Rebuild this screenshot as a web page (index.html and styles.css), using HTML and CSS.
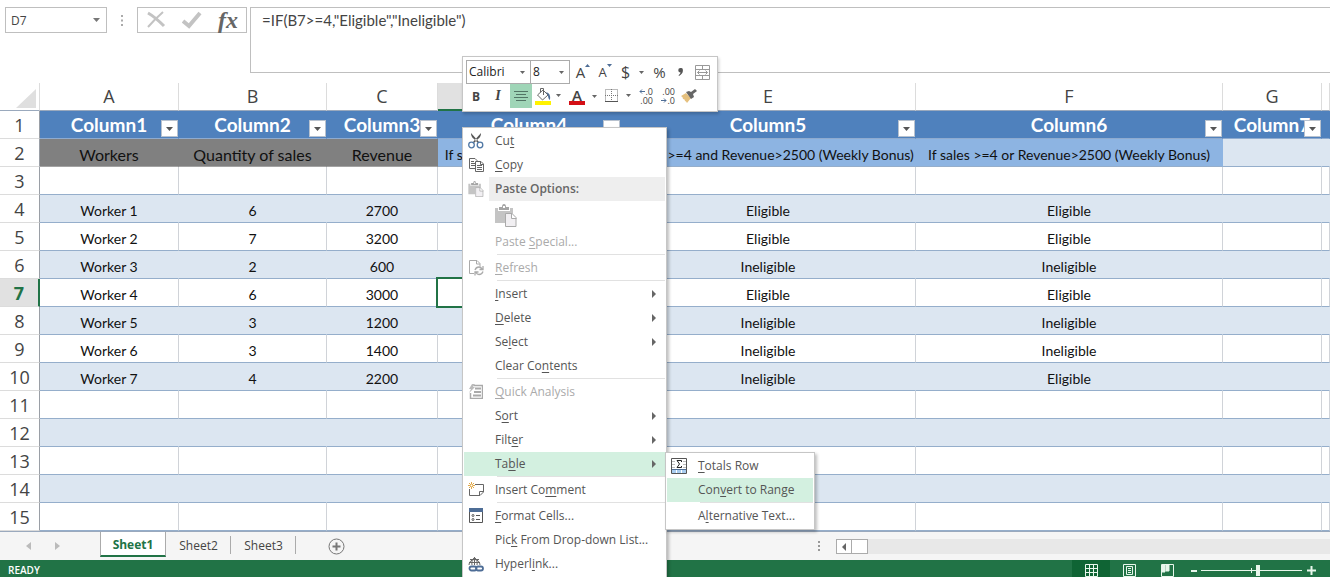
FILE: index.html
```html
<!DOCTYPE html>
<html lang="en">
<head>
<meta charset="utf-8">
<title>Worker bonuses</title>
<link rel="stylesheet" href="styles.css">
</head>
<body>
<div class="app">
  <header class="formula-bar">
    <div class="name-box">
      <input class="name-input" aria-label="Name box" value="D7">
      <button class="plain" aria-label="Cell names"><svg width="7" height="4" viewBox="0 0 7 4"><path d="M0 0h7L3.500 4z" fill="#777"/></svg></button>
    </div>
    <svg class="grip" width="2" height="11" viewBox="0 0 2 11" fill="#aaa"><path d="M0 0h2v2H0zM0 4.500h2v2H0zM0 9h2v2H0z"/></svg>
    <div class="fx-box">
      <button class="plain" aria-label="Cancel"><svg width="20" height="18" viewBox="0 0 20 18" fill="none" stroke="#c3c3c3"><path d="M2 2Q9 6 18 15" stroke-width="3"/><path d="M17 1Q9 8 2 16" stroke-width="2"/></svg></button>
      <button class="plain" aria-label="Enter"><svg width="20" height="18" viewBox="0 0 20 18" fill="none" stroke="#c3c3c3" stroke-width="4"><path d="M1 10l6 5L18 2"/></svg></button>
      <button class="plain fx" aria-label="Insert function">fx</button>
    </div>
    <textarea class="formula" aria-label="Formula">=IF(B7&gt;=4,"Eligible","Ineligible")</textarea>
  </header>

  <main class="grid">
    <table class="sheet">
      <colgroup><col class="c-num"><col class="c-a"><col class="c-b"><col class="c-c"><col class="c-d"><col class="c-e"><col class="c-f"><col class="c-g"><col></colgroup>
      <thead>
        <tr><th class="corner"><svg width="20" height="19" viewBox="0 0 20 19"><path d="M20 0v19H0z" fill="#dfdfdf"/></svg></th><th>A</th><th>B</th><th>C</th><th class="active-col"></th><th>E</th><th>F</th><th>G</th><th></th></tr>
      </thead>
      <tbody id="rows"></tbody>
    </table>
  </main>

  <nav class="tabs">
    <div class="tab-arrows">
      <button class="plain" aria-label="Previous sheet"><svg width="5" height="8" viewBox="0 0 5 8"><path d="M5 0v8L0 4z" fill="#bbb"/></svg></button>
      <button class="plain" aria-label="Next sheet"><svg width="5" height="8" viewBox="0 0 5 8"><path d="M0 0v8l5-4z" fill="#bbb"/></svg></button>
    </div>
    <button class="tab current">Sheet1</button>
    <button class="tab">Sheet2</button>
    <button class="tab">Sheet3</button>
    <button class="plain add" aria-label="New sheet"><svg width="17" height="17" viewBox="0 0 17 17" fill="none" stroke="#777"><circle cx="8.500" cy="8.500" r="7.500"/><path d="M8.500 4.500v8M4.500 8.500h8" stroke-width="2"/></svg></button>
    <svg class="tab-grip" width="2" height="10" viewBox="0 0 2 10" fill="#999"><path d="M0 0h2v2H0zM0 4h2v2H0zM0 8h2v2H0z"/></svg>
    <div class="scroll">
      <button class="plain scroll-left" aria-label="Scroll left"><svg width="4" height="8" viewBox="0 0 4 8"><path d="M4 0v8L0 4z" fill="#666"/></svg></button>
      <span class="thumb"></span>
    </div>
  </nav>

  <footer class="status">
    <span class="ready">READY</span>
    <button class="view on" aria-label="Normal"><svg width="13" height="13" viewBox="0 0 13 13" fill="none" stroke="#e8f7ec"><path d="M.5.5h12v12H.5zM4.500 0v13M8.500 0v13M0 4.500h13M0 8.500h13"/></svg></button>
    <button class="view" aria-label="Page layout"><svg width="13" height="13" viewBox="0 0 13 13" fill="none" stroke="#e8f7ec"><path d="M.5.5h12v12H.5zM3.500 2.500h6v8h-6zM5 4.500h3M5 6.500h3M5 8.500h3"/></svg></button>
    <button class="view" aria-label="Page break preview"><svg width="13" height="13" viewBox="0 0 13 13" fill="none" stroke="#e8f7ec"><path d="M.5.5h12v12H.5z"/><path d="M1 1h3v7H1zM5 1h3v6H5z" fill="#e8f7ec"/></svg></button>
    <button class="plain zoom" aria-label="Zoom out"><svg width="7" height="9" viewBox="0 0 7 9"><path d="M0 4h6v2H0z" fill="#e8f7ec"/></svg></button>
    <svg class="track" width="101" height="13" viewBox="0 0 101 13" fill="#e8f7ec"><path d="M0 6h101v1H0zM50 4h1v5h-1z"/><path d="M55 1h4v11h-4z"/></svg>
    <button class="plain zoom" aria-label="Zoom in"><svg width="9" height="9" viewBox="0 0 9 9"><path d="M3.500 0h2v3.500H9v2H5.500V9h-2V5.500H0v-2h3.500z" fill="#e8f7ec"/></svg></button>
  </footer>

  <div class="mini">
    <div class="mini-row">
      <span class="combo font"><select aria-label="Font"><option>Calibri</option></select><svg width="5" height="3" viewBox="0 0 5 3"><path d="M0 0h5L2.500 3z" fill="#666"/></svg></span>
      <span class="combo size"><select aria-label="Font size"><option>8</option></select><svg width="5" height="3" viewBox="0 0 5 3"><path d="M0 0h5L2.500 3z" fill="#666"/></svg></span>
      <button class="tool grow" aria-label="Increase font size">A<svg width="5" height="3" viewBox="0 0 5 3"><path d="M0 3h5L2.500 0z" fill="#4e6d96"/></svg></button>
      <button class="tool grow small" aria-label="Decrease font size">A<svg width="5" height="3" viewBox="0 0 5 3"><path d="M0 0h5L2.500 3z" fill="#4e6d96"/></svg></button>
      <button class="tool money" aria-label="Accounting format">$<svg width="5" height="3" viewBox="0 0 5 3"><path d="M0 0h5L2.500 3z" fill="#666"/></svg></button>
      <button class="tool pct" aria-label="Percent">%</button>
      <button class="tool comma" aria-label="Comma style"><svg width="5" height="8" viewBox="0 0 5 8"><path d="M2.500 0a2.200 2.200 0 0 1 2.400 2.400Q5 6 1 8L.6 7.200Q2.500 6 2.600 4.600A2.300 2.300 0 0 1 2.500 0z" fill="#555"/></svg></button>
      <button class="tool" aria-label="Merge and center"><svg width="15" height="15" viewBox="0 0 15 15" fill="none" stroke="#999"><path d="M.5.5h14v14H.5zM0 4.500h15M0 10.500h15M7.500 0v4M7.500 11v4M2.500 7.500h10M4.500 5.500l-2 2 2 2M10.500 5.500l2 2-2 2"/></svg></button>
    </div>
    <div class="mini-row second">
      <button class="tool bold">B</button>
      <button class="tool italic">I</button>
      <button class="tool center" aria-label="Center"><svg width="14" height="11" viewBox="0 0 14 11" fill="none" stroke="#527565"><path d="M0 .5h14M2 3.500h10M0 6.500h14M2 9.500h10"/></svg></button>
      <button class="tool fill" aria-label="Fill color"><svg width="26" height="17" viewBox="0 0 26 17"><path d="M2.500 7L8 2l5 5-5.500 5z" fill="#fff" stroke="#666"/><path d="M5.500 4.500V.5h3V7" fill="none" stroke="#666"/><path d="M11 4q5 1 4 8-2-1-2-5z" fill="#4e6d96"/><path d="M0 13h16v4H0z" fill="#fff200"/><path d="M21 6h5l-2.500 3z" fill="#666"/></svg></button>
      <button class="tool ink" aria-label="Font color"><span class="ink-letter">A</span><svg width="5" height="3" viewBox="0 0 5 3"><path d="M0 0h5L2.500 3z" fill="#666"/></svg></button>
      <button class="tool edges" aria-label="Borders"><svg width="26" height="14" viewBox="0 0 26 14"><path d="M.5.5h12v12H.5zM6.500 0v13M0 6.500h13" fill="none" stroke="#777" stroke-dasharray="1 1"/><path d="M0 12.500h13" stroke="#555"/><path d="M21 5h5l-2.500 3z" fill="#666"/></svg></button>
      <button class="tool dec" aria-label="Increase decimal"><span class="dec-part"><svg width="6" height="5" viewBox="0 0 6 5" fill="none" stroke="#4e6d96"><path d="M6 2.500H1M3 .5l-2 2 2 2"/></svg>.0</span><span>.00</span></button>
      <button class="tool dec" aria-label="Decrease decimal"><span>.00</span><span class="dec-part"><svg width="6" height="5" viewBox="0 0 6 5" fill="none" stroke="#4e6d96"><path d="M0 2.500h5M3 .5l2 2-2 2"/></svg>.0</span></button>
      <button class="tool" aria-label="Format painter"><svg width="16" height="15" viewBox="0 0 16 15"><path d="M0 7l5-3 5 5-4 5q-1-2-2-2 0-2-2-2 0-2-2-3z" fill="#e5c07e"/><path d="M5 3l3-1 2 1 4-3 2 2-4 3 1 3-3 2z" fill="#666"/></svg></button>
    </div>
  </div>

  <div class="menu main-menu" role="menu">
    <button class="item" role="menuitem"><span class="ico"><svg width="16" height="16" viewBox="0 0 16 16" fill="none"><path d="M3 0q0 4 3 6l4 4 1-1zM13 0q0 4-3 6l-4 4-1-1z" fill="#555"/><circle cx="3.500" cy="12" r="2.800" stroke="#5078a5" stroke-width="1.300"/><circle cx="12" cy="12" r="2.800" stroke="#5078a5" stroke-width="1.300"/></svg></span>Cu<u>t</u></button>
    <button class="item" role="menuitem"><span class="ico"><svg width="15" height="14" viewBox="0 0 15 14" fill="#fff" stroke="#666"><path d="M.5.5H6l2 2v8H.5zM2 3.500h3M2 5.500h4M2 7.500h4"/><path d="M6.500 3.500H12l2.500 2.500v7.500h-8zM8 7.500h5M8 9.500h5M8 11.500h5M11.500 3.500v3h3"/></svg></span><u>C</u>opy</button>
    <div class="item heading"><span class="ico"><svg width="16" height="16" viewBox="0 0 22 23"><use href="#clip"/></svg></span><span>Paste Options:</span></div>
    <button class="paste" role="menuitem" aria-label="Paste"><svg width="22" height="23" viewBox="0 0 22 23"><g id="clip"><path d="M0 4h3v3h12V4h3v6h-8v9H0z" fill="#c4c4c4"/><path d="M4 3h3q0-3 2-3t2 3h3v3H4z" fill="#a5a5a5"/><path d="M8 2h2v2H8z" fill="#fff"/><path d="M10.500 9.500H17l4 4v9H10.500zM16.500 9.500v5h5" fill="#f1eff2" stroke="#aaa"/></g></svg></button>
    <button class="item off" role="menuitem" disabled><span class="ico"></span>Paste <u>S</u>pecial...</button>
    <hr>
    <button class="item off" role="menuitem" disabled><span class="ico"><svg width="15" height="16" viewBox="0 0 15 16" fill="none" stroke="#aaa"><path d="M5 13.500H.5V.5H8l3 3v3M7.500.5V4H11" /><path d="M6 10q1-3 4-3 2 0 3 2M14 6v3.500h-3.500M14 11.500q-1 3-4 3-2 0-3-2M6 15.500V12h3.500" stroke-width="1.300"/></svg></span><u>R</u>efresh</button>
    <hr>
    <button class="item sub" role="menuitem"><span class="ico"></span><u>I</u>nsert</button>
    <button class="item sub" role="menuitem"><span class="ico"></span><u>D</u>elete</button>
    <button class="item sub" role="menuitem"><span class="ico"></span>Se<u>l</u>ect</button>
    <button class="item" role="menuitem"><span class="ico"></span>Clear Co<u>n</u>tents</button>
    <hr>
    <button class="item off" role="menuitem" disabled><span class="ico"><svg width="14" height="15" viewBox="0 0 14 15" fill="none" stroke="#aaa"><path d="M5 1.500h8.500v13H1.500V9" stroke-width="1.500"/><path d="M6 4.500h6M5 8h7M4 11.500h8" stroke-width="2"/><path d="M3 0h3L4 3h2L0 9l2-4H0z" fill="#bbb" stroke="none"/></svg></span><u>Q</u>uick Analysis</button>
    <button class="item sub" role="menuitem"><span class="ico"></span>S<u>o</u>rt</button>
    <button class="item sub" role="menuitem"><span class="ico"></span>Filt<u>e</u>r</button>
    <button class="item sub hot" role="menuitem" aria-expanded="true"><span class="ico"></span>Ta<u>b</u>le</button>
    <hr>
    <button class="item" role="menuitem"><span class="ico"><svg width="16" height="15" viewBox="0 0 16 15" fill="none"><path d="M7 2.500h8.500V10l-3.500 3.500H1.500V7M11.500 13.500v-4h4" stroke="#666"/><path d="M3.500 0v7M0 3.500h7M1 1l5 5M6 1L1 6" stroke="#e0a94a"/><circle cx="3.500" cy="3.500" r="1" fill="#fff"/></svg></span>Insert Co<u>m</u>ment</button>
    <hr>
    <button class="item" role="menuitem"><span class="ico"><svg width="14" height="15" viewBox="0 0 14 15" fill="none" stroke="#555"><path d="M.5.5h13v14H.5z"/><path d="M0 0h14v4H0z" fill="#4e6d96" stroke="none"/><circle cx="4" cy="7.500" r="1"/><circle cx="4" cy="11.500" r="1"/><path d="M7 7.500h4M7 11.500h4"/></svg></span><u>F</u>ormat Cells...</button>
    <button class="item" role="menuitem"><span class="ico"></span>Pic<u>k</u> From Drop-down List...</button>
    <button class="item" role="menuitem"><span class="ico"><svg width="16" height="16" viewBox="0 0 16 16" fill="none"><path d="M1 9a5.500 5.500 0 1 1 11 0M6.500 1v8M1 6.500h11M2 3.500h9M4 9q-1-5 2.500-7.500Q10 4 9 9" stroke="#666"/><rect x="1.500" y="10.500" width="7" height="4" rx="2" stroke="#4e6d96" stroke-width="1.800"/><rect x="8" y="10.500" width="7" height="4" rx="2" stroke="#4e6d96" stroke-width="1.800"/></svg></span>Hyperl<u>i</u>nk...</button>
  </div>

  <div class="menu sub-menu" role="menu">
    <button class="item" role="menuitem"><span class="ico"><svg width="16" height="16" viewBox="0 0 16 16" fill="none"><path d="M.5.5h15v15H.5z" fill="#fff" stroke="#555"/><path d="M1 3.500h14M1 6.500h14M1 9.500h14" stroke="#bbb"/><path d="M1 12h4v3H1zM6 12h4v3H6zM11 12h4v3h-4z" fill="#a9cdf0"/><path d="M1 11.500h14" stroke="#4e6d96"/><path d="M4 1h8v10H4z" fill="#fff"/><path d="M10.500 4V2.500H6L8.500 6 6 9.500h4.500V8" stroke="#222"/></svg></span><u>T</u>otals Row</button>
    <button class="item hot" role="menuitem"><span class="ico"></span>Con<u>v</u>ert to Range</button>
    <hr>
    <button class="item" role="menuitem"><span class="ico"></span>A<u>l</u>ternative Text...</button>
  </div>
</div>
<script src="sheet.js"></script>
</body>
</html>
```

FILE: styles.css
```css
* { box-sizing: border-box; }

body {
  margin: 0;
  font-family: "Open Sans", "Noto Sans", sans-serif;
  font-size: 12px;
  color: #444;
}

button, input, select, textarea { font: inherit; color: inherit; }

button { margin: 0; padding: 0; border: 0; background: none; }

.plain { display: flex; align-items: center; justify-content: center; }

.app {
  position: relative;
  display: flex;
  flex-direction: column;
  height: 100vh;
  overflow: hidden;
  background: #fff;
}

/* Formula bar */
.formula-bar { display: flex; align-items: flex-start; height: 83px; padding: 7px 0 0 5px; }

.name-box {
  display: flex;
  width: 102px;
  height: 26px;
  padding: 0 6px 0 5px;
  border: 1px solid #bfbfbf;
}

.name-input { flex: 1; min-width: 0; padding: 0; border: 0; background: none; outline: none; }

.grip { margin: 8px 14px 0; }

.fx-box { display: flex; gap: 16px; width: 110px; height: 26px; padding: 0 8px; border: 1px solid #bfbfbf; }

.fx { font: italic bold 24px/22px "Liberation Serif", serif; color: #666; }

.formula {
  flex: 1;
  height: 66px;
  margin-left: 3px;
  padding: 3px 11px;
  border: 1px solid #bfbfbf;
  border-right: 0;
  font-family: Lato, "Open Sans", sans-serif;
  font-size: 15px;
  line-height: 18px;
  background: #fff;
  resize: none;
  outline: none;
  overflow: hidden;
}

/* Sheet */
.grid { flex: 1; min-height: 0; overflow: hidden; border-bottom: 1px solid #9aa9bd; }

.sheet { width: 100%; table-layout: fixed; border-collapse: separate; border-spacing: 0; }

.c-num { width: 40px; }
.c-a { width: 139px; }
.c-b { width: 148px; }
.c-c { width: 111px; }
.c-d { width: 183px; }
.c-e { width: 295px; }
.c-f { width: 307px; }
.c-g { width: 99px; }

.sheet th, .sheet td {
  position: relative;
  height: 28px;
  padding: 0;
  text-align: center;
  white-space: nowrap;
  line-height: 20px;
}

.sheet thead th {
  padding-bottom: 2px;
  border-right: 1px solid #dcdcdc;
  border-bottom: 1px solid #9aa9bd;
  font-size: 18px;
  font-weight: 400;
}

.sheet thead .corner { text-align: right; padding: 4px 3px 0 0; }
.corner svg { display: block; margin-left: auto; }

.sheet thead .active-col { background: #e1e1e1; border-bottom: 2px solid #217346; }

.sheet tbody th {
  border-right: 1px solid #9a9fa6;
  border-bottom: 1px solid #dcdcdc;
  font-size: 18px;
  font-weight: 400;
}

.sheet tbody .active-row {
  background: #e1e1e1;
  border-right: 2px solid #217346;
  color: #217346;
  font-weight: 700;
}

.sheet td {
  padding-top: 4px;
  border-right: 1px solid #d0d3d8;
  border-bottom: 1px solid #95aecb;
  font-family: Lato, "Open Sans", sans-serif;
  font-size: 14px;
  color: #111;
}

.sheet .band td { background: #dce6f1; border-right-color: #dce6f1; }

.sheet .titles td {
  padding-top: 0;
  background: #4f81bd;
  border-right-color: #4f81bd;
  border-bottom-color: #8fabcf;
  font-size: 19px;
  font-weight: 700;
  color: #fff;
}

.sheet .captions td { font-size: 16px; }
.sheet .captions .gray { background: #808080; border-right-color: #808080; border-bottom-color: #a3a3a3; }
.sheet .captions .sky { background: #8db4e2; border-right-color: #8db4e2; font-size: 14px; }

.title { margin: 0 -10px; }

.filter {
  position: absolute;
  right: 0;
  bottom: 1px;
  display: flex;
  align-items: center;
  justify-content: center;
  width: 17px;
  height: 17px;
  border: 1px solid #b8c2cf;
  background: #fff;
}

.cursor { position: absolute; inset: -2px; border: 2px solid #217346; z-index: 1; }

/* Sheet tabs */
.tabs { display: flex; align-items: stretch; height: 28px; background: #f5f5f5; }

.tab-arrows { display: flex; gap: 24px; width: 100px; padding-left: 26px; }

.tab { position: relative; width: 65px; height: 25px; padding-top: 2px; }
.tab:not(.current)::after {
  content: "";
  position: absolute;
  right: 0;
  top: 4px;
  bottom: 3px;
  border-right: 1px solid #ababab;
}

.current {
  width: 66px;
  border: 1px solid #ababab;
  border-top: 0;
  border-bottom: 2px solid #217346;
  background: #fff;
  color: #217346;
  font-weight: 700;
}

.add { margin-left: 32px; }
.tab-grip { margin: 9px 16px 0 auto; }

.scroll { display: flex; width: calc(37% + 2px); margin: 7px 0 6px; background: #e8e8e8; }
.scroll-left, .thumb { border: 1px solid #ababab; background: #fff; }
.scroll-left { width: 16px; }
.thumb { width: 17px; margin-left: -1px; }

/* Status bar */
.status { display: flex; align-items: center; height: 17px; padding-right: 14px; background: #217346; color: #fff; overflow: hidden; }
.ready { flex: 1; padding: 3px 0 0 8px; font-size: 10px; font-weight: 600; line-height: 14px; }
.view { display: flex; justify-content: center; width: 38px; height: 17px; padding-top: 4px; }
.on { background: #0f6434; }
.zoom { margin: 4px 0 0 5px; }
.track { margin: 4px 0 0 3px; }

/* Mini toolbar */
.mini {
  position: absolute;
  left: 462px;
  top: 56px;
  z-index: 3;
  width: 256px;
  padding: 3px;
  border: 1px solid #c6c6c6;
  background: #fff;
  box-shadow: 1px 2px 3px rgba(0, 0, 0, .2);
}

.mini-row { display: flex; align-items: center; height: 24px; }

.combo { position: relative; height: 24px; border: 1px solid #ababab; }
.combo + .combo { margin-left: -1px; }
.combo select { width: 100%; height: 22px; padding: 0 2px; border: 0; background: none; appearance: none; color: #222; line-height: 20px; }
.combo svg { position: absolute; right: 5px; top: 10px; pointer-events: none; }
.font { width: 65px; }
.size { width: 40px; }

.tool { display: flex; flex: none; align-items: center; justify-content: center; }
.grow { align-items: flex-start; width: 20px; margin-left: 3px; font-size: 15px; font-weight: 500; line-height: 22px; }
.grow svg { margin-top: 3px; }
.grow.small { font-size: 13px; margin-left: 2px; }
.money { gap: 9px; margin-left: 6px; font-size: 16px; font-weight: 500; }
.pct { margin: 0 12px 0 9px; font-size: 15px; font-weight: 500; }
.comma { margin-right: 12px; }

.bold { width: 20px; font-weight: 700; }
.italic { width: 24px; font: italic bold 14px "Liberation Serif", serif; }
.center { width: 22px; height: 24px; background: #9fd5b7; }
.fill { margin-left: 3px; }
.ink { gap: 7px; margin-left: 8px; }
.ink-letter { width: 16px; height: 17px; border-bottom: 4px solid #d40f16; font-size: 15px; font-weight: 600; line-height: 15px; }
.edges { margin: 0 6px 0 8px; }
.dec { flex-direction: column; align-items: flex-end; width: 16px; margin-right: 6px; font-size: 9px; line-height: 9px; }
.dec-part { display: flex; align-items: center; }

/* Menus */
.menu {
  position: absolute;
  z-index: 2;
  padding: 1px;
  border: 1px solid #c6c6c6;
  background: #fff;
  box-shadow: 2px 2px 3px rgba(0, 0, 0, .25);
}

.main-menu { left: 462px; top: 127px; width: 205px; }
.sub-menu { left: 665px; top: 452px; width: 150px; }

.item {
  position: relative;
  display: flex;
  align-items: center;
  width: 100%;
  height: 24px;
  padding-bottom: 1px;
  white-space: pre;
  text-align: left;
  color: #555;
}

.ico { display: flex; flex: none; justify-content: center; width: 24px; margin-right: 7px; }
.heading { background: linear-gradient(90deg, #fff 25px, #eee 25px); color: #666; font-weight: 600; }
.off { color: #aaa; }
.hot { background: #d3f0e0; }

.sub::after {
  content: "";
  position: absolute;
  right: 9px;
  top: 8px;
  border: 4px solid transparent;
  border-left-color: #666;
  border-right-width: 0;
}

.paste { display: flex; align-items: center; height: 29px; margin-left: 31px; }

.menu hr { height: 1px; margin: 0 0 1px 33px; border: 0; background: #e1e1e1; }

u { text-underline-offset: 2px; }
```

FILE: sheet.js
```js
const arrow = '<svg width="7" height="4" viewBox="0 0 7 4"><path d="M0 0h7L3.500 4z" fill="#555"/></svg>';
const workers = [
  ['Worker 1', 6, 2700, '', 'Eligible', 'Eligible'],
  ['Worker 2', 7, 3200, '', 'Eligible', 'Eligible'],
  ['Worker 3', 2, 600, '', 'Ineligible', 'Ineligible'],
  ['Worker 4', 6, 3000, '', 'Eligible', 'Eligible'],
  ['Worker 5', 3, 1200, '', 'Ineligible', 'Ineligible'],
  ['Worker 6', 3, 1400, '', 'Ineligible', 'Ineligible'],
  ['Worker 7', 4, 2200, '', 'Ineligible', 'Eligible'],
];
const captions = [
  ['gray', 'Workers'], ['gray', 'Quantity of sales'], ['gray', 'Revenue'],
  ['sky', 'If sales &gt;=4 (Weekly Bonus)'],
  ['sky', 'If sales &gt;=4 and Revenue&gt;2500 (Weekly Bonus)'],
  ['sky', 'If sales &gt;=4 or Revenue&gt;2500 (Weekly Bonus)'],
];

let html = '<tr class="titles"><th>1</th>';
for (let c = 1; c <= 7; c++) {
  html += `<td><div class="title">Column${c}</div><button class="filter" aria-label="Filter Column${c}">${arrow}</button></td>`;
}
html += '<td></td></tr><tr class="captions band"><th>2</th>';
captions.forEach(([cls, text]) => { html += `<td class="${cls}">${text}</td>`; });
html += '<td></td><td></td></tr>';

for (let r = 3; r <= 15; r++) {
  const data = workers[r - 4] || [];
  html += `<tr class="${r % 2 ? '' : 'band'}"><th class="${r === 7 ? 'active-row' : ''}">${r}</th>`;
  for (let c = 0; c < 8; c++) {
    const cursor = r === 7 && c === 3 ? '<span class="cursor"></span>' : '';
    html += `<td>${data[c] ?? ''}${cursor}</td>`;
  }
  html += '</tr>';
}
document.getElementById('rows').innerHTML = html;
```
